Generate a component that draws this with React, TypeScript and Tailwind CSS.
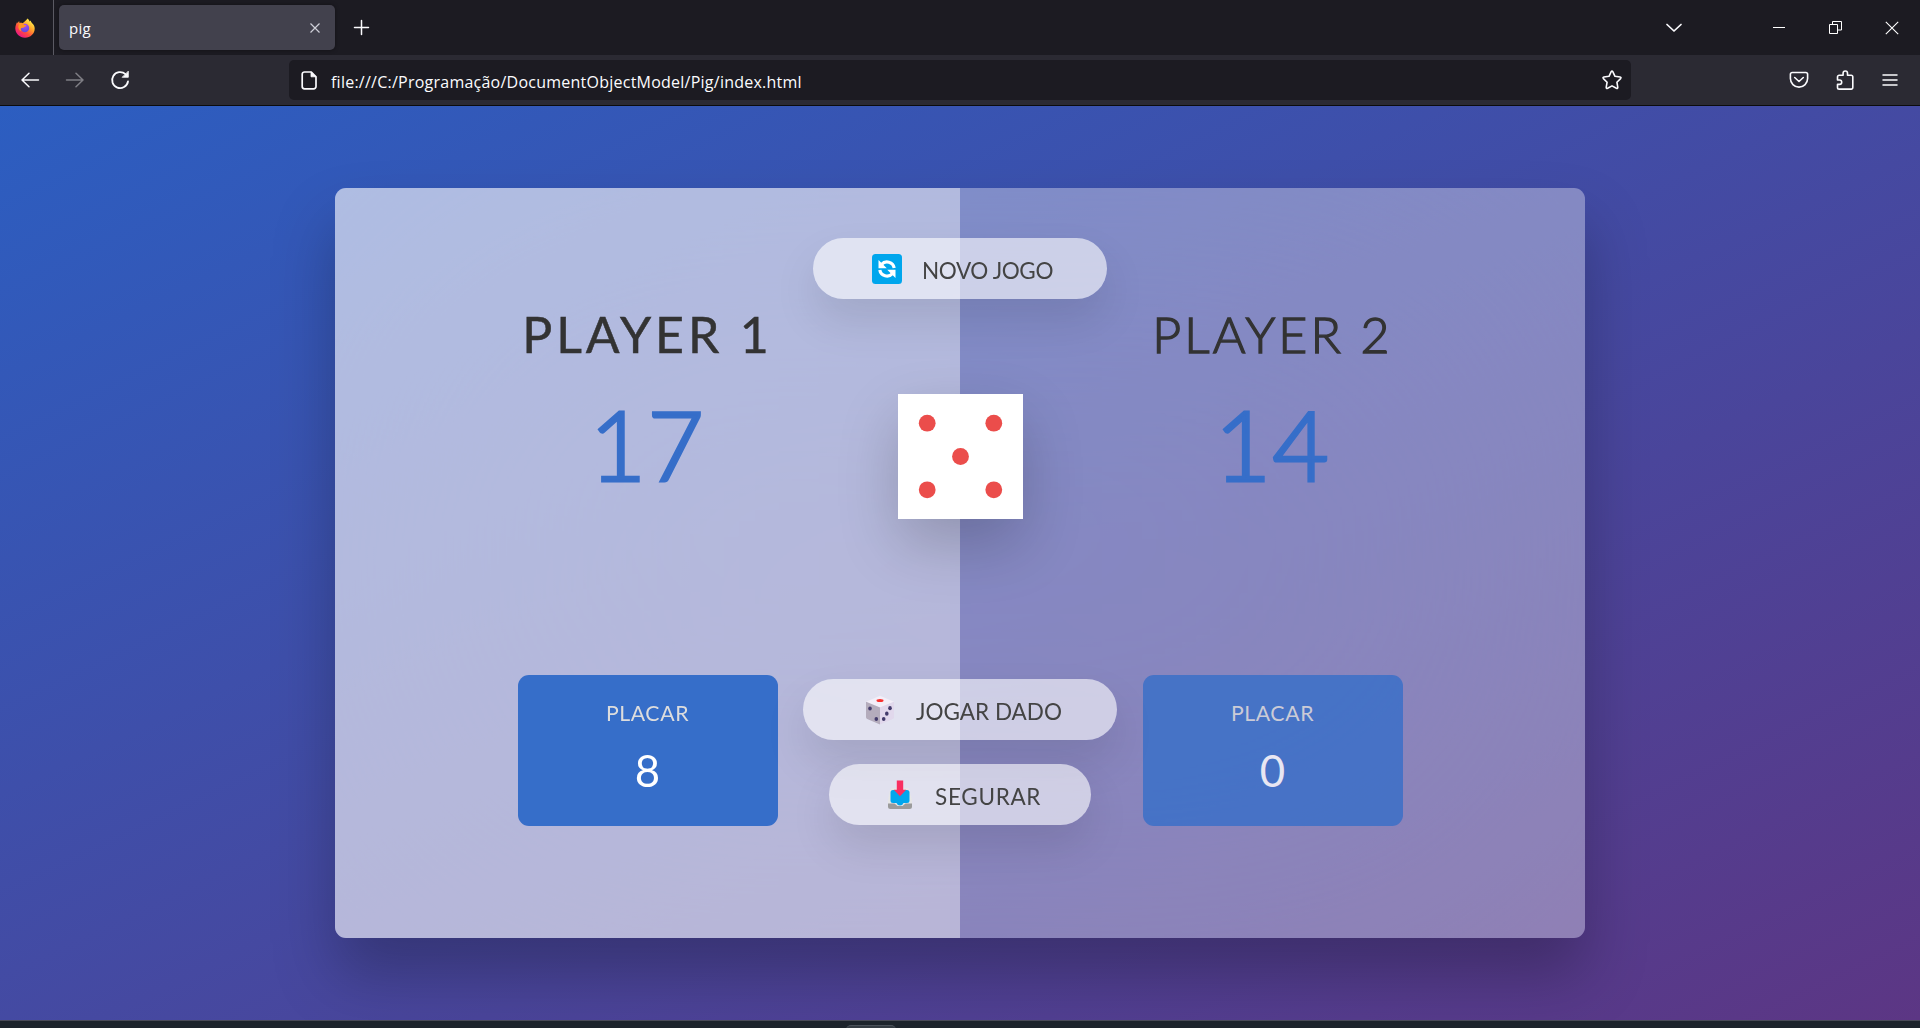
import type { ReactNode } from "react";

function FirefoxLogo() {
  return (
    <svg width="20" height="20" viewBox="0 0 20 20">
      <defs>
        <linearGradient id="flame" x1="0.85" y1="0.1" x2="0.2" y2="0.95">
          <stop offset="0" stopColor="#fff44f" />
          <stop offset="0.35" stopColor="#ffa52a" />
          <stop offset="0.65" stopColor="#ff4b3e" />
          <stop offset="1" stopColor="#e8128c" />
        </linearGradient>
        <radialGradient id="globe" cx="0.5" cy="0.2" r="0.8">
          <stop offset="0" stopColor="#b04cf0" />
          <stop offset="1" stopColor="#5b4be0" />
        </radialGradient>
      </defs>
      <path d="M12.6.4c1 .7 1.8 2 2 3.2.5-.2.8-.5 1-1 .5 1.400.6 1.600 1.300 2.300C18.800 6.400 19.700 8.300 19.700 10.500c0 5.200-4.300 9.200-9.700 9.200S.3 15.700.3 10.600c0-2.600.9-4.700 1.800-6.500.2.500.4.900.6 1.200.4-1 .9-1.700 1.500-2.200 0 .7.100 1.200.4 1.800 1.100-.3 2.300-.1 3.100.3C9 3.600 10.800 2.900 12.600.4z" fill="url(#flame)" />
      <circle cx="9.900" cy="10" r="4.300" fill="url(#globe)" />
      <path d="M4.600 5.200c2-.6 4 .2 4.600 1.900 1 0 2 .2 2.200.6-.6.700-1.500.9-2.400 1.500-.7.700-1.900.6-2.800.8-.8 1-.5 2.500.3 3.300-2-.7-3.300-2.700-3.200-4.900z" fill="#ff9425" />
    </svg>
  );
}

const stroke = {
  fill: "none",
  stroke: "#fbfbfe",
  strokeWidth: 1.5,
  strokeLinecap: "round" as const,
  strokeLinejoin: "round" as const,
};

function BackIcon({ className = "" }: { className?: string }) {
  return (
    <svg className={className} width="20" height="20" viewBox="0 0 20 20" {...stroke}>
      <path d="M18.500 10H2M9 3.200L2 10l7 6.800" />
    </svg>
  );
}

function ReloadIcon() {
  return (
    <svg width="20" height="20" viewBox="0 0 20 20" {...stroke} strokeWidth={1.800}>
      <path d="M18 11.500A8 8 0 1 1 15.500 4.200" />
      <path d="M18.300 1.500v5.800h-5.800z" fill="#fbfbfe" strokeWidth={0.800} />
    </svg>
  );
}

function PageIcon() {
  return (
    <svg width="16" height="19" viewBox="0 0 16 19" {...stroke} strokeWidth={1.700}>
      <path d="M3.500 1h6.800L15 5.800v9.700a2.300 2.300 0 0 1-2.300 2.300H3.500A2.300 2.300 0 0 1 1.200 15.500V3.300A2.300 2.300 0 0 1 3.500 1z" />
      <path d="M10 1.200v4.600h4.600z" fill="#fbfbfe" strokeWidth={0.800} />
    </svg>
  );
}

function StarIcon() {
  return (
    <svg width="20" height="20" viewBox="0 0 20 20" {...stroke} strokeWidth={1.600}>
      <path d="M9.200 1.600q.8-1.200 1.600 0l2.200 4.700 5.100.7q1.500.4.500 1.600l-3.700 3.600.9 5.100q0 1.500-1.400 1L10 15.900l-4.400 2.400q-1.400.5-1.400-1l.9-5.100L1.400 8.600q-1-1.200.5-1.600l5.100-.7z" />
    </svg>
  );
}

function PocketIcon() {
  return (
    <svg width="20" height="18" viewBox="0 0 20 18" {...stroke} strokeWidth={1.600}>
      <path d="M3.200 1.500h13.600a1.800 1.800 0 0 1 1.800 1.800v4.200a8.600 8.600 0 0 1-17.200 0V3.300a1.800 1.800 0 0 1 1.800-1.800z" />
      <path d="M5.700 6.500l4.300 4 4.300-4" />
    </svg>
  );
}

function ExtensionIcon() {
  return (
    <svg width="18" height="20" viewBox="0 0 18 20" {...stroke} strokeWidth={1.600}>
      <path d="M1.500 10V7a1.700 1.700 0 0 1 1.700-1.700h3.900V3.200a2.200 2.200 0 0 1 4.400 0v2.100h3.700A1.600 1.600 0 0 1 16.800 7v10.500a1.600 1.600 0 0 1-1.600 1.600h-12a1.700 1.700 0 0 1-1.700-1.700v-3h2a2.200 2.200 0 0 0 0-4.400z" />
    </svg>
  );
}

function MenuIcon() {
  return (
    <svg width="16" height="14" viewBox="0 0 16 14" {...stroke}>
      <path d="M1 2h14M1 7h14M1 12h14" />
    </svg>
  );
}

function TabStrip() {
  return (
    <div className="flex h-[55px] shrink-0 items-center bg-[#1c1b22]">
      <div className="flex h-full w-[54px] items-center border-r border-[#5b5a63] pl-[15px]">
        <FirefoxLogo />
      </div>
      <div className="ml-[5px] flex h-[45px] w-[276px] items-center justify-between rounded-[5px] bg-[#42414d] pr-[14px] pl-[10px] shadow-[0_0_4px_rgba(0,0,0,0.4)]">
        <span className="pt-[2px] font-['Open_Sans','Noto_Sans',sans-serif] text-[15px] tracking-[0.300px] text-[#fbfbfe]">pig</span>
        <svg width="12" height="12" viewBox="0 0 12 12" stroke="#cfcfd8" strokeWidth="1.200">
          <path d="M1.500 1.500l9 9M10.500 1.500l-9 9" />
        </svg>
      </div>
      <svg className="ml-[18px]" width="17" height="17" viewBox="0 0 17 17" {...stroke}>
        <path d="M8.500 1.500v14M1.500 8.500h14" />
      </svg>
      <div className="mr-[21px] ml-auto flex items-center">
        <svg className="mr-[88px]" width="18" height="12" viewBox="0 0 18 12" {...stroke} strokeWidth={1.700}>
          <path d="M2 2.500l7 6.500 7-6.500" />
        </svg>
        <svg className="mr-[44px]" width="14" height="14" viewBox="0 0 14 14" stroke="#fff">
          <path d="M2 6.500h12" />
        </svg>
        <svg className="mr-[43px]" width="13" height="13" viewBox="0 0 13 13" fill="none" stroke="#fff">
          <path d="M.5 3.500h8v9h-8zM3.500 3.500v-3h9v8.500h-4" />
        </svg>
        <svg width="14" height="14" viewBox="0 0 14 14" stroke="#fff" strokeWidth="1.100">
          <path d="M.8.800l12.400 12.400M13.200.800L.8 13.200" />
        </svg>
      </div>
    </div>
  );
}

function Toolbar() {
  return (
    <div className="flex h-[51px] shrink-0 items-center border-b border-[#0c0c0d] bg-[#2b2a33] pl-5">
      <BackIcon />
      <BackIcon className="ml-[25px] rotate-180 opacity-40" />
      <div className="ml-[25px]">
        <ReloadIcon />
      </div>
      <div className="ml-[159px] flex h-10 w-[1342px] items-center rounded-[5px] bg-[#1c1b22] pr-[9px] pl-3">
        <PageIcon />
        <span className="mt-[3px] ml-[14px] flex-1 font-['Open_Sans','Noto_Sans',sans-serif] text-[16px] tracking-[0.240px] text-[#fbfbfe]">
          file:///C:/Programação/DocumentObjectModel/Pig/index.html
        </span>
        <StarIcon />
      </div>
      <div className="mr-[22px] ml-auto flex items-center">
        <PocketIcon />
        <div className="mr-[28px] ml-[27px]">
          <ExtensionIcon />
        </div>
        <MenuIcon />
      </div>
    </div>
  );
}

type PlayerProps = { name: string; score: number; current: number; active?: boolean };

function Player({ name, score, current, active = false }: PlayerProps) {
  return (
    <section className={`flex flex-1 flex-col items-center py-[112.500px] ${active ? "bg-white/40" : ""}`}>
      <h2
        className={`flex h-[68px] items-center text-[50px] whitespace-nowrap [stroke-linejoin:round] ${
          active
            ? "font-normal tracking-[3.900px] [-webkit-text-stroke:0.500px_#333]"
            : "font-light tracking-[3.100px] [-webkit-text-stroke:1.400px_#333]"
        }`}
      >
        {name}
      </h2>
      <p className="mt-[7px] flex h-[136px] items-center text-[97px] font-light tracking-[1.500px] text-[#366ec9] [stroke-linejoin:round] [-webkit-text-stroke:3.200px_#366ec9]">
        {score}
      </p>
      <div
        className={`mt-auto flex h-[151px] w-[260px] flex-col items-center rounded-[11px] bg-[#366ec9] pt-[25px] text-white ${
          active ? "" : "opacity-80"
        }`}
      >
        <p className="flex h-[29px] items-center text-[21.250px] tracking-[0.600px] text-[#ddd]">PLACAR</p>
        <p className="mt-[12px] flex h-[60px] items-center text-[43.750px]">{current}</p>
      </div>
    </section>
  );
}

function ActionButton({ className, icon, children }: { className: string; icon: ReactNode; children: string }) {
  return (
    <button
      className={`absolute left-1/2 flex h-[61px] -translate-x-1/2 items-center rounded-full bg-white/60 text-[22.500px] whitespace-nowrap text-[#444] shadow-[0_22px_44px_rgba(0,0,0,0.1)] ${className}`}
    >
      {icon}
      <span className="mt-[5px]">{children}</span>
    </button>
  );
}

function RenewIcon() {
  return (
    <svg width="30" height="30" viewBox="0 0 30 30">
      <rect width="30" height="30" rx="3.500" fill="#00a6ed" />
      <g fill="none" stroke="#fff" strokeWidth="3.200">
        <path d="M9.500 10.500a7.300 7.300 0 0 1 12.700 3.500" />
        <path d="M20.500 19.500a7.300 7.300 0 0 1-12.700-3.500" />
      </g>
      <path d="M6.500 6v8.300h8.300zM23.500 24v-8.300h-8.300z" fill="#fff" />
    </svg>
  );
}

function DiceIcon() {
  return (
    <svg width="30" height="30" viewBox="0 0 30 30">
      <path d="M15 .8L1 6.800 15 12.500 29 6.800z" fill="#f3eef8" />
      <path d="M1 6.800l14 5.700v17L2.200 24Q1 23.500 1 22z" fill="#b4acbc" />
      <path d="M29 6.800l-14 5.700v17L27.800 24q1.200-.5 1.200-2z" fill="#e1d8ec" />
      <ellipse cx="15" cy="5.600" rx="3.500" ry="1.500" fill="#f8312f" />
      <g fill="#433b6b">
        <ellipse cx="5" cy="13.500" rx="1.800" ry="2.100" />
        <ellipse cx="11.300" cy="24" rx="1.800" ry="2.100" />
        <ellipse cx="25" cy="13.200" rx="1.800" ry="2.100" />
        <ellipse cx="21.800" cy="18.700" rx="1.800" ry="2.100" />
        <ellipse cx="18.700" cy="24" rx="1.800" ry="2.100" />
      </g>
    </svg>
  );
}

function InboxIcon() {
  return (
    <svg width="26" height="30" viewBox="0 0 26 30">
      <path d="M1 21v5.500A2.500 2.500 0 0 0 3.500 29h19a2.500 2.500 0 0 0 2.500-2.500V21z" fill="#9b9b9b" />
      <path d="M4.500 8h17l3.500 12v3.500h-6.500L15.500 26h-5l-3-2.500H1V20L3 10z" fill="#e6e6e6" />
      <path d="M6 10h14q2.500 0 2.500 2.500v8q0 2.500-2.500 2.500h-3.500Q15.500 25.500 13 25.500T9.500 23H6q-2.500 0-2.500-2.500v-8Q3.500 10 6 10z" fill="#00a6ed" />
      <path d="M9.800.500h6.400v9.200h3L13 16.300 6.800 9.700h3z" fill="#f92f60" />
    </svg>
  );
}

function Dice() {
  return (
    <div className="absolute top-[206px] left-1/2 ml-[-62px] size-[125px] bg-white shadow-[0_25px_62px_rgba(0,0,0,0.2)]">
      <svg width="125" height="125" viewBox="0 0 125 125" fill="#eb4d4b">
        <circle cx="29.200" cy="29.200" r="8.400" />
        <circle cx="95.800" cy="29.200" r="8.400" />
        <circle cx="62.500" cy="62.500" r="8.400" />
        <circle cx="29.200" cy="95.800" r="8.400" />
        <circle cx="95.800" cy="95.800" r="8.400" />
      </svg>
    </div>
  );
}

export default function App() {
  return (
    <div className="flex h-[1028px] w-full flex-col overflow-hidden">
      <TabStrip />
      <Toolbar />
      <div className="flex h-[914px] shrink-0 items-center justify-center overflow-hidden bg-[linear-gradient(to_top_left,#5c3684_0%,#2c5ec1_100%)]">
        <main className="relative flex h-[750px] w-[1250px] overflow-hidden rounded-[11px] bg-white/35 font-['Lato',sans-serif] text-[#333] shadow-[0_37px_62px_rgba(0,0,0,0.25)] backdrop-blur-[200px]">
          <Player name="PLAYER 1" score={17} current={8} active />
          <Player name="PLAYER 2" score={14} current={0} />
          <Dice />
          <ActionButton className="top-[50px] w-[294px] gap-[20px] pl-[59px] tracking-[-0.400px]" icon={<RenewIcon />}>
            NOVO JOGO
          </ActionButton>
          <ActionButton className="top-[491px] w-[314px] gap-[21px] pl-[62px]" icon={<DiceIcon />}>
            JOGAR DADO
          </ActionButton>
          <ActionButton className="top-[576px] w-[262px] gap-[22px] pl-[58px] tracking-[0.700px]" icon={<InboxIcon />}>
            SEGURAR
          </ActionButton>
        </main>
      </div>
      <div className="flex h-2 shrink-0 overflow-hidden border-t border-[#4a4b58] bg-[#1d242c] pt-[4px]">
        <div className="ml-[846px] h-3 w-[50px] rounded-t-[5px] border-t border-[#4b525a] bg-[#343b43]" />
      </div>
    </div>
  );
}
